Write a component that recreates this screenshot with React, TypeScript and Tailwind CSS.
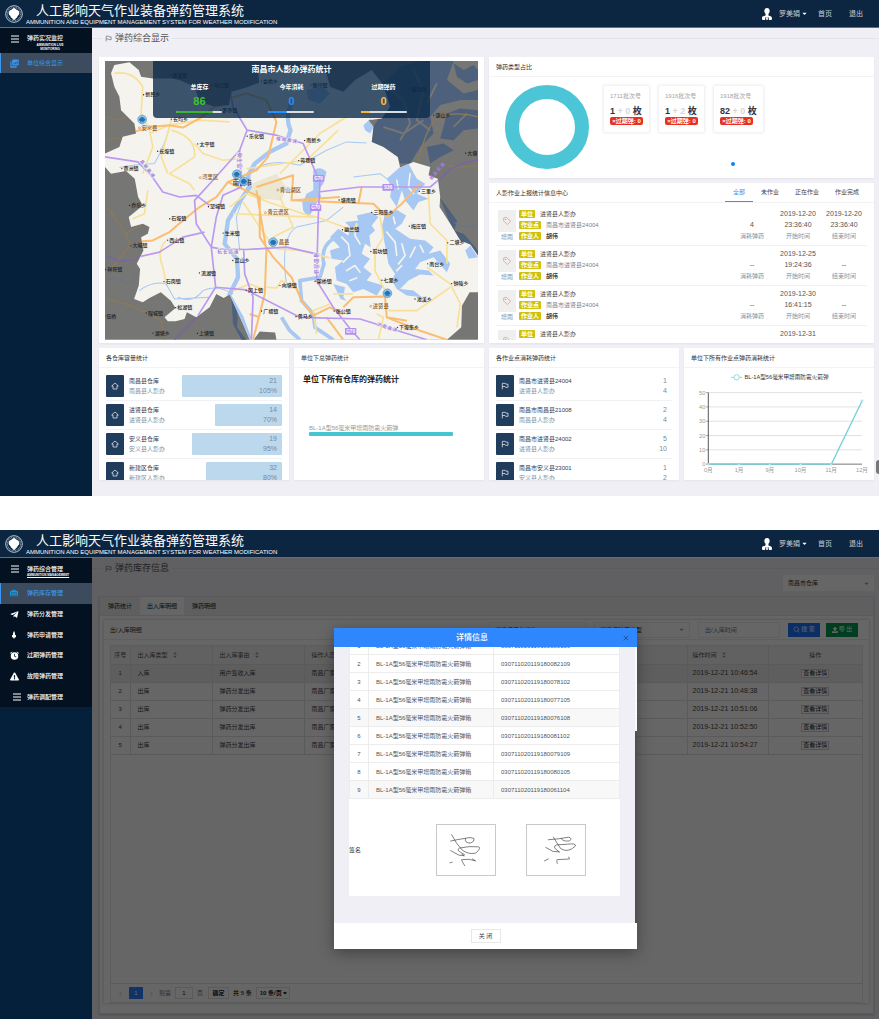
import React from "react";
import { Tag, Search, X, ChevronLeft, ChevronRight } from "lucide-react";
import { FaExclamationTriangle, FaTelegramPlane, FaWarehouse, FaCaretDown, FaUpload } from "react-icons/fa";

type IconProps = { className?: string };

/* ---------- icons ---------- */

const FlagIcon = ({ className }: IconProps) => (
  <svg viewBox="0 0 24 24" className={className} fill="none" stroke="currentColor" strokeWidth="2">
    <path d="M4 22V4h9l1.500 2.500H21V16h-7.500L12 13.500H4" />
  </svg>
);

const HomeIcon = ({ className }: IconProps) => (
  <svg viewBox="0 0 24 24" className={className} fill="none" stroke="currentColor" strokeWidth="2" strokeLinejoin="round">
    <path d="M12 3 2 12h4v9h12v-9h4z" />
  </svg>
);

const MenuIcon = ({ className }: IconProps) => (
  <svg viewBox="0 0 24 24" className={className} stroke="currentColor" strokeWidth="3">
    <path d="M0 3h24M0 12h24M0 21h24" />
  </svg>
);

const UserIcon = ({ className }: IconProps) => (
  <svg viewBox="0 0 30 36" className={className} fill="currentColor">
    <path d="M15 0c5 0 8 3.500 8 9s-3 10-8 10S7 14.500 7 9s3-9 8-9z" />
    <path d="M11 17h8l1 6c6 0 10 3 10 7v3c0 2-1 3-3 3h-6l-2-9h-8l-2 9H3c-2 0-3-1-3-3v-3c0-4 4-7 10-7z" />
    <path d="M13 26h4l1 8-2 2h-2l-2-2z" />
  </svg>
);

const AlarmIcon = ({ className }: IconProps) => (
  <svg viewBox="0 0 24 24" className={className} fill="currentColor">
    <path fillRule="evenodd" d="M12 3a10 10 0 1 1 0 20 10 10 0 0 1 0-20zm-1 4v7l5 3 1-1.500-4-2.500V7z" />
    <path d="M1 8a5 5 0 0 1 6-6zM23 8a5 5 0 0 0-6-6z" />
  </svg>
);

const RocketIcon = ({ className }: IconProps) => (
  <svg viewBox="0 0 24 24" className={className} fill="currentColor">
    <path d="M12 0c3 4 3 8 3 11l3 2v6h-3l-3 5-3-5H6v-6l3-2c0-3 0-7 3-11z" />
  </svg>
);

const LayersIcon = ({ className }: IconProps) => (
  <svg viewBox="0 0 24 24" className={className} fill="currentColor">
    <path d="M8 1h13a2 2 0 0 1 2 2v12a2 2 0 0 1-2 2H8a2 2 0 0 1-2-2V3a2 2 0 0 1 2-2z" />
    <path d="M4 6v13h14v2a2 2 0 0 1-2 2H3a2 2 0 0 1-2-2V8a2 2 0 0 1 2-2z" />
    <path d="M11 10v4m4-6v6m4-8v8" stroke="#3c4b5d" strokeWidth="2" />
  </svg>
);

const Logo = () => (
  <svg viewBox="0 0 54 54" className="size-[18px] shrink-0">
    <circle cx="27" cy="27" r="25" fill="none" stroke="#b8c4cf" strokeWidth="3" />
    <circle cx="27" cy="27" r="20" fill="none" stroke="#7f93a6" strokeWidth="4" strokeDasharray="3 2" />
    <path
      d="M27 9c4 0 5 4 8 5 5 1 8 5 8 10s-2 6-5 9c-2 3-1 6-5 6l-3 5h-6l-3-5c-4 0-3-3-5-6-3-3-5-4-5-9s3-9 8-10c3-1 4-5 8-5z"
      fill="#fff"
    />
  </svg>
);

/* ---------- shared parts ---------- */

const TopBar = () => (
  <header className="flex h-[28px] items-center justify-between border-b border-[#5a7189] bg-[#0c2641] text-white">
    <div className="flex items-center pl-[5px]">
      <Logo />
      <div className="pl-[3px]">
        <h1 className="pl-[10px] pt-px text-[13px] leading-[16px]">人工影响天气作业装备弹药管理系统</h1>
        <p className="text-[6px] leading-[7px]">
          AMMUNITION AND EQUIPMENT MANAGEMENT SYSTEM FOR WEATHER MODIFICATION
        </p>
      </div>
    </div>
    <nav className="flex items-center pr-4 text-[7px] leading-[9px] text-[#c3ced8]">
      <UserIcon className="h-[12px] w-[10px] text-white" />
      <button type="button" className="ml-[7px] flex items-center gap-px">
        罗美娟
        <FaCaretDown className="size-[7px] text-white" />
      </button>
      <a href="#home" className="ml-[10px]">首页</a>
      <a href="#logout" className="ml-[17px]">退出</a>
    </nav>
  </header>
);

const PageTitle = ({ children }: { children: string }) => (
  <div className="flex h-[20px] items-center">
    <span className="h-px w-[10px] bg-[#e4e4e8]" />
    <FlagIcon className="ml-[3px] size-[7px] text-[#555]" />
    <h2 className="px-[3px] text-[9px] leading-[12px] text-[#555]">{children}</h2>
    <span className="h-px flex-1 bg-[#e4e4e8]" />
  </div>
);

const Card = ({ title, extra, children, className = "" }: { title: string; extra?: React.ReactNode; children: React.ReactNode; className?: string }) => (
  <section className={"min-w-0 overflow-hidden bg-white shadow-[0_1px_2px_rgba(0,0,0,0.05)] " + className}>
    <div className="flex h-[20px] items-center justify-between border-b border-[#f3f3f5] px-[7px]">
      <h3 className="whitespace-nowrap text-[6px] leading-[8px] text-[#333]">{title}</h3>
      {extra}
    </div>
    {children}
  </section>
);

/* ---------- map ---------- */

type Label = [number, number, string];

const towns: Label[] = [
  [160, 139, "新民乡"], [202, 308, "长埠镇"], [322, 286, "太平镇"], [470, 263, "乐化镇"], [642, 276, "南新乡"],
  [624, 336, "蒋巷镇"], [745, 454, "塘南镇"], [1028, 200, "康山乡"], [1116, 314, "大塘"], [985, 428, "三里乡"],
  [95, 360, "黄洲镇"], [118, 470, "乔乐乡"], [354, 474, "望城镇"], [238, 510, "石埠镇"], [850, 491, "三阳集乡"],
  [955, 532, "梅庄镇"], [398, 553, "生米镇"], [232, 574, "西山镇"], [122, 591, "大城镇"], [755, 543, "幽兰镇"],
  [840, 608, "前坊镇"], [1070, 582, "二塘乡"], [427, 635, "富山乡"], [327, 672, "流湖镇"], [1010, 645, "南台乡"],
  [46, 662, "祥符镇"], [221, 698, "石岗镇"], [873, 694, "七里乡"], [1082, 704, "钟陵乡"], [467, 725, "冈上镇"],
  [568, 710, "向塘镇"], [673, 697, "架桥镇"], [972, 750, "池溪乡"], [168, 792, "隍城镇"], [256, 776, "松湖镇"],
  [513, 786, "广福镇"], [616, 803, "黄马乡"], [730, 786, "张公镇"], [188, 852, "湖塘乡"], [321, 853, "上塘镇"],
  [927, 835, "下埠集乡"], [240, 80, "滩溪镇"], [365, 110, "马口镇"], [512, 98, "金桥乡"], [660, 110, "联圩镇"],
  [390, 186, "罗亭镇"], [243, 212, "长均乡"], [955, 122, "瑞洪镇"], [36, 802, "伍桥"],
];

const districts: Label[] = [
  [150, 238, "安义县"], [332, 387, "湾里区"], [572, 424, "青山湖区"], [535, 492, "青云谱区"], [553, 580, "昌县"], [842, 772, "进贤县"],
];

const shields: Label[] = [[656, 384, "G70"], [864, 411, "S36"], [647, 472, "G70"], [752, 842, "G70"]];

const pins: [number, number][] = [[128, 208], [411, 372], [432, 393], [520, 575], [862, 728]];

const region =
  "M35 70L45 45 90 37 118 60 125 80 160 85 215 85 240 90 285 110 300 155 345 170 388 165 395 125 440 112 478 98 475 60 520 50 620 60 680 70 690 110 730 125 765 90 815 60 850 105 870 170 845 205 805 210 820 230 815 275 850 290 893 320 900 352 940 335 990 350 985 375 1013 385 1020 440 1018 470 1050 520 1080 570 1110 582 1133 615V725L1108 725 1085 765 1083 830 1040 867H530L526 845 480 842 462 867H450L430 820 390 732 372 742 350 730 330 770 290 800 262 785 255 805 228 812 205 812 195 800 228 772 214 750 184 725 150 742 130 755 104 745 118 705 122 655 112 640 132 600 125 560 145 550 150 530 130 520 95 530 88 500 130 465 116 440 106 385 80 362 35 370 17 350V310L60 290 70 260 110 250 105 220 65 180 60 140 45 110z";

const MapView = () => (
  <svg viewBox="17 33 1116 834" className="block h-auto w-full" role="img" aria-label="南昌市">
    <defs>
      <clipPath id="region"><path d={region} /></clipPath>
    </defs>
    <rect x="17" y="33" width="1116" height="834" fill="#767674" />
    <g fill="#4d607c">
      <path d="M800 120L860 90 900 50 960 33H1060L1040 90 1090 130 1133 120V150L1080 150 1020 165 990 200 1000 250 960 290 930 340 900 340 893 320 850 290 815 275 820 230 845 190z" />
      <path d="M1060 40L1090 60 1120 45 1133 60V90L1100 100 1070 80zM1040 190L1080 175 1133 180V235L1090 240 1060 270 1020 265 1030 230zM980 290L1030 280 1060 300 1020 320 990 340zM1018 440L1040 470 1070 510 1062 540 1090 550 1133 600V620L1080 570 1050 520z" />
      <path d="M395 735Q420 780 412 830L440 867H425L400 820z" />
    </g>
    <g fill="none" stroke="#767674" strokeWidth="6">
      <path d="M860 110l50 40 20 70-30 50M940 60l30 60-20 90 40 30M1010 100l-30 60M850 230l60 20 60-40M1100 190l-40 40" />
    </g>
    <g fill="none" stroke="#8c7a57" strokeWidth="4">
      <path d="M17 200L60 210 90 195 110 215M17 270L60 262M20 465L60 520 80 550 92 585 60 625 35 655M80 550L130 520M20 745L80 760 140 785 185 810 195 867M940 380Q980 220 1010 205 1060 180 1133 200M1040 345L1080 352 1133 345" />
    </g>
    <path d="M1133 330Q1050 340 1020 390M17 615L60 632 120 625M300 790L225 867" fill="none" stroke="#7c62a6" strokeWidth="4" />
    <path d="M17 690Q60 670 80 700 105 690 112 670M1060 515Q1100 540 1133 520" fill="none" stroke="#6a7584" strokeWidth="3" />

    <path d={region} fill="#f5f3ed" />
    <g clipPath="url(#region)">
      <path d="M455 400L530 370 560 410 545 450 480 445 450 430z" fill="#eae7d3" />
      <g fill="#a7c8f2">
        <path d="M860 385L900 350 925 340 950 385 975 400 950 430 985 445 955 455 940 480 915 450 905 420 890 470 870 440 875 410z" />
        <path d="M640 360Q662 345 680 365L670 400 655 420 665 440 640 452 610 455 620 430 640 420zM607 455L655 450 640 480 625 500 610 480z" />
        <path d="M855 490L890 478 918 495 905 520 885 535 930 565 975 570 1000 590 985 610 1020 600 1050 640 1040 665 1000 620 960 635 945 655 985 660 1000 675 960 672 925 690 900 715 940 720 965 740 920 735 890 715 875 690 885 670 865 640 858 600 850 560 845 530z" />
        <path d="M690 560L715 535 745 555 750 530 735 515 775 510 770 495 815 485 835 500 815 525 825 540 808 555 812 590 795 580 785 610 810 625 790 650 815 670 800 690 850 705 830 735 790 715 760 725 740 700 710 690 705 650 730 630 695 625 690 600 720 590z" />
        <path d="M790 225L812 205 820 232 810 250 795 240zM1095 600L1110 585 1133 620 1105 625zM700 700L735 710 730 740 740 750 722 745zM620 120L670 110 690 130 660 160 625 150z" />
      </g>
      <g fill="none" stroke="#f5f3ed" strokeWidth="5" strokeLinecap="round" strokeLinejoin="round">
        <path d="M725 560l20 20 5 35-20 20M770 520l-5 35 15 25M740 660l25-15 15 20M750 690l20-8M860 545l25 30 5 40M905 580l10 35-20 25M945 590l-15 30M970 605l-10-20M880 500l5 20M890 660l15-15M930 370l-5 40 15 20M890 390l5 25" />
      </g>
      <g fill="none" stroke="#a7c8f2" strokeLinejoin="round">
        <path d="M575 160Q555 205 572 240L560 280 510 305 465 340 445 375 450 410 415 460 385 510 375 580 412 625 415 680 388 735 425 800 450 867" strokeWidth="13" />
        <path d="M700 565Q660 590 672 640L660 680 600 690 605 750 640 790 645 830 700 867M545 800L570 840 600 867" strokeWidth="11" />
        <path d="M215 210Q200 280 165 340L100 345 60 352M450 370Q500 320 600 345L680 300 740 275 800 278M235 740Q280 760 310 720 350 700 400 730M560 700Q540 560 590 530L680 510 730 470M120 720Q160 690 200 700L225 745 330 740M760 380L840 370 880 400M445 400L410 500 420 600" strokeWidth="3" />
      </g>
      <g fill="none" stroke="#f8e09a" strokeWidth="5" strokeLinejoin="round">
        <path d="M45 70Q100 60 130 110L125 190 150 240 160 290 130 370M215 210L185 320 205 370M215 240Q290 260 285 320L240 350 210 370 270 400 285 420M150 250L210 225 300 210 390 215M285 280L310 310 370 330 420 325M390 470L440 430 520 460 610 490 650 500 760 540 770 520M430 455L520 590M440 355L620 330 715 240M540 370L660 250 740 200M145 420L135 490 100 505M200 570Q170 600 190 650L200 700M520 560L580 530 540 440M530 595L600 600 690 622M500 710L530 712 545 690 600 720M840 500L850 560 825 600 825 660 855 720M690 760L640 780 650 850M985 430L990 520 1040 570 1040 640M980 650L1050 700 1080 760 1070 830M865 780L950 780 1050 710M400 490L640 500M830 790L850 800 835 867M700 730L760 730M400 720L450 700 500 720" />
      </g>
      <g fill="none" stroke="#fabd72" strokeWidth="6" strokeLinejoin="round">
        <path d="M17 270L120 240 160 230 210 225 250 232 300 205 370 150 440 130 500 150 530 215 505 320 470 360 385 395 350 440 300 470 250 510 210 545 160 570 90 575M385 395L480 440 480 560 520 620 575 680 605 750 640 795 690 770 730 790M470 420L500 600 495 730 460 867M470 410L580 375 575 450 820 460 860 500 905 460 960 400M580 450L720 440M730 770L760 740 855 738 860 800 960 840 1040 867M680 800L730 867M860 800L920 810M775 460L785 410M450 790L480 800" />
      </g>
      <g fill="none" stroke="#b99af0" strokeWidth="5" strokeLinejoin="round">
        <path d="M17 320L115 335 155 375 190 425 240 440 290 435 330 465M380 60L400 170 442 240 530 255 610 280 660 395 655 500 650 690 700 770 755 840 780 867M442 240L420 300 340 390 285 450 290 520 335 590 360 595 440 597 560 590 650 610M420 300L425 410 370 435 350 500 335 590 348 710 295 795M17 615L60 632 180 605 250 560 315 545M348 710L440 718 600 800 780 805 980 867M432 600L435 670 460 740 455 867M655 425L780 410 990 410 1020 385" />
      </g>
    </g>

    <g fontSize="13" fontWeight="700" fill="#a27de0" textAnchor="middle" stroke="#f5f3ed" strokeWidth="3" paintOrder="stroke">
      <text x="560" y="274" transform="rotate(8 560 274)">福 银 高 速</text>
      <text x="385" y="606">杭 长 高 速</text>
      <text x="140" y="358" transform="rotate(52 140 358)">昌 铜 高 速</text>
      <text x="860" y="834" transform="rotate(18 860 834)">沪 昆 高 速</text>
      <text x="1014" y="366" transform="rotate(-50 1014 366)" stroke="none">德 昌 高 速</text>
      <text x="648" y="635" transform="rotate(90 644 635)">福 银 高 速</text>
      <text x="420" y="335" transform="rotate(90 416 335)">枫 生 高 速</text>
    </g>
    <g fontSize="15" fontWeight="500" textAnchor="middle" fill="#222">
      {towns.map(([x, y, t]) => (
        <g key={t}>
          <text x={x} y={y}>{t}</text>
          <circle cx={x - (t.length * 15) / 2 - 5} cy={y - 5} r="2" />
        </g>
      ))}
    </g>
    <g fontSize="16" fontWeight="500" textAnchor="middle" fill="#8a5c30">
      {districts.map(([x, y, t]) => (
        <g key={t}>
          <text x={x} y={y}>{t}</text>
          <circle cx={x - t.length * 8 - 6} cy={y - 5} r="3" fill="none" stroke="#a07346" strokeWidth="1.500" />
        </g>
      ))}
    </g>
    {shields.map(([x, y, t]) => (
      <g key={t + y}>
        <rect x={x - 17} y={y - 10} width="34" height="20" rx="2" fill="#b48ff0" />
        <text x={x} y={y + 5} textAnchor="middle" fontSize="14" fontWeight="700" fill="#fff">{t}</text>
      </g>
    ))}
    <text x="428" y="405" textAnchor="middle" fontSize="19" fontWeight="500" fill="#222">南昌市</text>
    {pins.map(([x, y]) => (
      <g key={x}>
        <circle cx={x} cy={y} r="13" fill="#8cc4ee" stroke="#4f8fc4" strokeWidth="2" />
        <path d={`M${x - 9} ${y - 1}q9-13 18 0v4q-9 5-18 0z`} fill="#2272b4" />
        <path d={`M${x - 6} ${y + 7}h12`} stroke="#1b5688" strokeWidth="2" />
      </g>
    ))}
  </svg>
);

const totals = [
  { label: "总库存", value: 86, text: "text-[#3fc22f]", bar: "bg-[#3fb52f] w-4/5" },
  { label: "今年消耗", value: 0, text: "text-[#1e90ff]", bar: "bg-[#1e90ff] w-2/5" },
  { label: "过期弹药", value: 0, text: "text-[#ffbe43]", bar: "bg-[#f5b73b] w-1/5" },
];

const MapCard = () => (
  <section className="col-span-2 self-start bg-white px-[6px] pb-[3px] pt-1 shadow-[0_1px_2px_rgba(0,0,0,0.05)]">
    <div className="relative">
      <MapView />
      <div className="absolute inset-x-[13%] top-0 h-[57px] rounded-b bg-[#0c2a4a]/80 text-center text-white">
        <h3 className="pt-[3px] text-[8px] font-bold leading-[12px]">南昌市人影办弹药统计</h3>
        <div className="grid grid-cols-3 pt-[7px]">
          {totals.map((t) => (
            <div key={t.label} className="flex flex-col items-center">
              <span className="text-[6px] font-bold leading-[8px]">{t.label}</span>
              <strong className={"pt-[3px] text-[11px] leading-[14px] " + t.text}>{t.value}</strong>
              <span className="mt-[3px] block h-[2px] w-1/2 rounded bg-[#d9dde2]">
                <span className={"block h-full rounded " + t.bar} />
              </span>
            </div>
          ))}
        </div>
      </div>
    </div>
  </section>
);

/* ---------- dashboard cards ---------- */

const batches = [
  { name: "1711批次号", a: 1, b: 0 },
  { name: "1916批次号", a: 1, b: 2 },
  { name: "1918批次号", a: 82, b: 0 },
];

const TypeShare = () => (
  <Card title="弹药类型占比">
    <div className="flex h-[101px] pl-4">
      <svg viewBox="0 0 84 84" className="mt-[8px] size-[84px] shrink-0">
        <circle cx="42" cy="42" r="35" fill="none" stroke="#4cc6d6" strokeWidth="14" />
      </svg>
      <div className="flex flex-1 flex-col items-center justify-between pb-3 pl-[14px] pr-3 pt-2">
        <ul className="flex gap-2 self-start">
          {batches.map((b) => (
            <li key={b.name} className="h-[48px] rounded-[2px] border border-[#f3f3f3] px-[6px] pt-[6px] shadow-[0_0_3px_rgba(0,0,0,0.08)]">
              <p className="text-[6px] leading-[8px] text-[#a5a5a5]">{b.name}</p>
              <p className="whitespace-nowrap pt-[5px] text-[9px] font-bold leading-[12px] text-[#33343f]">
                {b.a} <span className="text-[#d5d7da]">+ {b.b}</span> 枚
              </p>
              <p className="flex h-[8px] w-[33px] items-center justify-center whitespace-nowrap rounded-[2px] bg-[#e8301f] text-[6px] font-bold leading-[8px] text-white">
                ×过期弹: 0
              </p>
            </li>
          ))}
        </ul>
        <span className="size-1 rounded-full bg-[#1180ff]" />
      </div>
    </div>
  </Card>
);

const reports = [
  { used: "4", start: ["2019-12-20", "23:36:40"], end: ["2019-12-20", "23:36:40"] },
  { used: "--", start: ["2019-12-25", "19:24:36"], end: ["", "--"] },
  { used: "--", start: ["2019-12-30", "16:41:15"], end: ["", "--"] },
  { used: "--", start: ["2019-12-31", "10:20:08"], end: ["", "--"] },
];

const Badge = ({ children }: { children: string }) => (
  <span className="h-[8px] rounded-[1px] bg-[#cfc00c] px-[2px] text-[6px] font-bold leading-[8px] text-white">{children}</span>
);

const Stat = ({ top, mid, label }: { top?: string; mid: string; label: string }) => (
  <div className="flex w-[46px] flex-col items-center text-[#555]">
    <span className="h-[11px] text-[7px] leading-[8px]">{top}</span>
    <span className="h-[11px] text-[7px] leading-[8px]">{mid}</span>
    <span className="text-[6px] leading-[8px] text-[#8292a2]">{label}</span>
  </div>
);

const ReportCenter = () => (
  <Card
    title="人影作业上报统计信息中心"
    extra={
      <nav className="flex h-full text-[6px] text-[#444]">
        <button type="button" className="h-full border-b border-[#3a94e8] px-2 text-[#3a94e8]">全部</button>
        <button type="button" className="px-2">未作业</button>
        <button type="button" className="px-2">正在作业</button>
        <button type="button" className="px-2">作业完成</button>
      </nav>
    }
  >
    <ul className="mx-[7px] mb-[3px] mt-[3px] h-[134px] overflow-hidden">
      {reports.map((r) => (
        <li key={r.start[0]} className="flex h-[40px] border-b border-[#f2f2f4] pt-1">
          <div className="ml-[2px] flex w-[18px] flex-col items-center">
            <span className="flex h-[22px] w-full items-center justify-center bg-[#efefef]">
              <Tag className="size-[8px] text-[#ef8a66]" />
            </span>
            <span className="pt-px text-[6px] leading-[8px] text-[#8292a2]">增雨</span>
          </div>
          <div className="flex flex-1 flex-col gap-[3px] pl-[3px] text-[6px] leading-[8px] text-[#444]">
            <p className="flex gap-[5px]"><Badge>单位</Badge>进贤县人影办</p>
            <p className="flex gap-[5px] text-[#71859a]"><Badge>作业点</Badge>南昌市进贤县24004</p>
            <p className="flex gap-[5px] font-bold"><Badge>作业人</Badge>胡伟</p>
          </div>
          <Stat mid={r.used} label="消耗弹药" />
          <Stat top={r.start[0]} mid={r.start[1]} label="开始时间" />
          <Stat top={r.end[0]} mid={r.end[1]} label="结束时间" />
        </li>
      ))}
    </ul>
  </Card>
);

type ListRow = { name: string; unit: string; a: string; b: string; bar?: string };

const stores: ListRow[] = [
  { name: "南昌县仓库", unit: "南昌县人影办", a: "21", b: "105%", bar: "w-[100px]" },
  { name: "进贤县仓库", unit: "进贤县人影办", a: "14", b: "70%", bar: "w-[67px]" },
  { name: "安义县仓库", unit: "安义县人影办", a: "19", b: "95%", bar: "w-[90px]" },
  { name: "新建区仓库", unit: "新建区人影办", a: "32", b: "80%", bar: "w-[76px]" },
];

const points: ListRow[] = [
  { name: "南昌市进贤县24004", unit: "进贤县人影办", a: "1", b: "4" },
  { name: "南昌市南昌县21008", unit: "南昌县人影办", a: "2", b: "4" },
  { name: "南昌市进贤县24002", unit: "进贤县人影办", a: "5", b: "10" },
  { name: "南昌市安义县23001", unit: "安义县人影办", a: "1", b: "2" },
];

const StatList = ({ rows, icon }: { rows: ListRow[]; icon: React.ReactNode }) => (
  <ul className="mx-[7px] h-[112px] overflow-hidden pt-[7px]">
    {rows.map((r) => (
      <li key={r.name} className="mb-[3px] flex border-b border-[#f2f2f4] pb-[3px]">
        <span className="flex h-[22px] w-[18px] items-center justify-center rounded-[1px] bg-[#213d5e] text-white">{icon}</span>
        <div className="flex flex-1 flex-col justify-between whitespace-nowrap py-[2px] pl-[5px] text-[6px] leading-[8px]">
          <span className="text-[#3a3a4a]">{r.name}</span>
          <span className="text-[#8292a2]">{r.unit}</span>
        </div>
        <div
          className={
            "flex h-[22px] flex-col justify-between rounded-[1px] py-[2px] pr-[5px] text-right text-[7px] leading-[8px] text-[#7b8a99] " +
            (r.bar ? "bg-[#bcd8ed] " + r.bar : "w-[30px]")
          }
        >
          <span>{r.a}</span>
          <span>{r.b}</span>
        </div>
      </li>
    ))}
  </ul>
);

const months = ["0月", "1月", "9月", "10月", "11月", "12月"];

const LineChart = () => (
  <svg viewBox="612 86 571 334" className="block h-auto w-full" fontSize="17">
    <path d="M753 114h34" stroke="#8edbe3" strokeWidth="3" />
    <circle cx="770" cy="114" r="8" fill="#fff" stroke="#8edbe3" strokeWidth="3" />
    <text x="794" y="120" fill="#333">BL-1A型56毫米甲增雨防雹火箭弹</text>
    {[50, 40, 30, 20, 10, 0].map((v, i) => (
      <g key={v}>
        <path d={`M685 ${160 + i * 43}H1147`} stroke={v ? "#d2d2d2" : "#777"} strokeWidth={v ? 2 : 3} />
        <path d={`M678 ${160 + i * 43}h7`} stroke="#777" strokeWidth="2" />
        <text x="676" y={166 + i * 43} textAnchor="end" fill="#999">{v}</text>
      </g>
    ))}
    <path d="M685 160V375" stroke="#555" strokeWidth="3" />
    <path d="M685 375H1055L1147 185" fill="none" stroke="#72d2dc" strokeWidth="4" />
    {months.map((m, i) => (
      <g key={m}>
        <circle cx={685 + i * 92.4} cy={i === 5 ? 185 : 375} r="3" fill="#fff" stroke="#72d2dc" strokeWidth="2" />
        <text x={685 + i * 92.4} y="400" textAnchor="middle" fill="#999">{m}</text>
      </g>
    ))}
  </svg>
);

const Dashboard = () => (
  <section>
    <TopBar />
    <div className="flex">
      <aside className="w-[92px] shrink-0 bg-[#04203b] text-white">
        <div className="flex h-[25px] items-center bg-[#031121] pl-[11px]">
          <MenuIcon className="-mt-1 size-[8px]" />
          <div className="pl-2 pt-1">
            <p className="text-[6px] font-medium leading-[8px]">弹药实况监控</p>
            <p className="w-[46px] pt-px text-center text-[3px] font-bold leading-[4px]">AMMUNITION LIVE MONITORING</p>
          </div>
        </div>
        <a href="#overview" className="flex h-[20px] items-center border-l border-[#3d96ee] bg-[#3c4b5d] pl-[9px] text-[6px] leading-[8px] text-[#3d96ee]">
          <LayersIcon className="mr-2 size-[9px]" />
          单位综合显示
        </a>
      </aside>
      <main className="relative min-w-0 flex-1 bg-[#f0eff5] pb-4">
        <PageTitle>弹药综合显示</PageTitle>
        <div className="grid grid-cols-4 gap-[5px] pl-[7px] pr-[5px] pt-[9px]">
          <MapCard />
          <div className="col-span-2 flex flex-col gap-[5px]">
            <TypeShare />
            <ReportCenter />
          </div>
          <Card title="各仓库容量统计">
            <StatList rows={stores} icon={<HomeIcon className="size-[8px]" />} />
          </Card>
          <Card title="单位下总弹药统计">
            <h4 className="pl-[9px] pt-[6px] text-[8px] font-bold leading-[12px] text-[#222]">单位下所有仓库的弹药统计</h4>
            <div className="px-[15px] pt-[38px]">
              <p className="text-[6px] leading-[8px] text-[#999]">BL-1A型56毫米甲增雨防雹火箭弹</p>
              <span className="block h-[4px] w-[90%] rounded-[1px] bg-[#47c4d3]" />
            </div>
          </Card>
          <Card title="各作业点消耗弹药统计">
            <StatList rows={points} icon={<FlagIcon className="size-[8px]" />} />
          </Card>
          <Card title="单位下所有作业点弹药消耗统计">
            <LineChart />
          </Card>
        </div>
        <button type="button" aria-label="展开" className="absolute bottom-[22px] right-0 h-[14px] w-[3px] rounded-l bg-[#777]" />
      </main>
    </div>
  </section>
);

/* ---------- stock page ---------- */

const navItems = [
  { label: "弹药库存管理", icon: <FaWarehouse className="size-[8px] text-[#1597e0]" />, active: true },
  { label: "弹药分发管理", icon: <FaTelegramPlane className="size-[9px]" /> },
  { label: "弹药申请管理", icon: <RocketIcon className="size-[8px]" /> },
  { label: "过期弹药管理", icon: <AlarmIcon className="size-[9px]" /> },
  { label: "故障弹药管理", icon: <FaExclamationTriangle className="size-[9px]" /> },
  { label: "弹药调配管理", icon: <MenuIcon className="ml-[3px] size-[8px]" /> },
];

const logs = [
  ["入库", "用户签收入库", "2019-12-21 10:46:54"],
  ["出库", "弹药分发出库", "2019-12-21 10:48:38"],
  ["出库", "弹药分发出库", "2019-12-21 10:51:06"],
  ["出库", "弹药分发出库", "2019-12-21 10:52:50"],
  ["出库", "弹药分发出库", "2019-12-21 10:54:27"],
];

const boxes = [
  "030711020119180083106", "030711020119180082109", "030711020119180078102", "030711020119180077105", "030711020119180076108",
  "030711020119180081102", "030711020119180079109", "030711020119180080105", "030711020119180061104",
];

const Sorter = () => (
  <svg viewBox="0 0 10 16" className="ml-1 inline-block h-[6px] w-[4px] align-middle" fill="#999">
    <path d="M5 0l5 6H0zM5 16l5-6H0z" />
  </svg>
);

const Picker = ({ label, className }: { label: string; className: string }) => (
  <span className={"relative flex items-center " + className}>
    <select aria-label={label} className="h-full w-full appearance-none bg-transparent px-[5px] text-[6px] leading-[8px] text-[#333] outline-none">
      <option>{label}</option>
    </select>
    <FaCaretDown className="pointer-events-none absolute right-[4px] size-[7px] text-[#999]" />
  </span>
);

const SignatureA = () => (
  <svg viewBox="0 0 180 156" className="h-[52px] w-[60px] border border-[#c9c9c9]" fill="none" stroke="#3c3c3c" strokeWidth="2" strokeLinecap="round" strokeLinejoin="round">
    <path d="M45 30Q60 60 78 78 95 92 120 88 140 70 128 68 100 65 70 72 55 78 85 92M42 50Q60 46 85 42 105 36 115 42 118 52 105 56 85 58 88 42M42 80L68 94 85 96 78 92M86 127Q72 105 78 108 100 104 120 112L110 106M40 118l7-2" />
  </svg>
);

const SignatureB = () => (
  <svg viewBox="0 0 180 156" className="h-[52px] w-[60px] border border-[#c9c9c9]" fill="none" stroke="#3c3c3c" strokeWidth="2" strokeLinecap="round" strokeLinejoin="round">
    <path d="M82 38Q95 60 105 74 128 88 150 66 155 56 125 60L92 62Q75 68 100 84M66 46Q100 44 130 38 142 42 132 50 110 52 106 42M58 70L80 82 100 84M94 120Q90 105 96 108L132 106 130 100M54 112l12-6" />
  </svg>
);

const DetailDialog = () => (
  <div role="dialog" aria-label="详情信息" className="w-[303px] shadow-[0_4px_14px_rgba(0,0,0,0.35)]">
    <div className="relative flex h-[19px] items-center justify-center bg-[#2f87fe] pr-[27px]">
      <h3 className="text-[8px] font-medium leading-[12px] text-white">详情信息</h3>
      <button type="button" aria-label="关闭窗口" className="absolute right-[7px]">
        <X className="size-[8px] text-[#1a3a66]" />
      </button>
    </div>
    <div className="flex h-[276px]">
      <div className="flex min-w-0 flex-1 flex-col justify-end overflow-hidden bg-[#f0eff5] px-[15px] pb-[27px]">
        <div className="bg-white">
          <table className="w-full table-fixed border-collapse text-left text-[6px] leading-[8px] text-[#555]">
            <colgroup><col className="w-[19px]" /><col className="w-[125px]" /><col /></colgroup>
            <tbody>
              {boxes.map((n, i) => (
                <tr key={n} className={"h-[18px] border border-[#ececec] " + (i === 4 || i === 8 ? "bg-[#f8f8f8]" : "bg-white")}>
                  <td className="border-r border-[#ececec] text-center">{i + 1}</td>
                  <td className="border-r border-[#ececec] px-[7px]">BL-1A型56毫米甲增雨防雹火箭弹箱</td>
                  <td className="px-[7px]">{n}</td>
                </tr>
              ))}
            </tbody>
          </table>
          <div className="flex h-[97px] items-center">
            <span className="w-[87px] pt-1 text-[6px] leading-[8px] text-[#333]">签名</span>
            <div className="flex gap-[30px] pt-1">
              <SignatureA />
              <SignatureB />
            </div>
          </div>
        </div>
      </div>
      <div className="w-[2px] bg-[#505050]"><div className="h-[84px] bg-[#fafafa]" /></div>
    </div>
    <div className="flex h-[26px] items-center justify-center bg-white">
      <button type="button" className="h-[14px] w-[30px] border border-[#e8e8e8] text-[6px] leading-[8px] text-[#444]">关 闭</button>
    </div>
  </div>
);

const StockPage = () => (
  <section>
    <TopBar />
    <div className="flex">
      <aside className="w-[92px] shrink-0 bg-[#04203b] text-white">
        <div className="flex h-[25px] items-center bg-[#031121] pl-[11px]">
          <MenuIcon className="-mt-1 size-[8px]" />
          <div className="pl-2">
            <p className="text-[6px] font-medium leading-[8px]">弹药综合管理</p>
            <p className="whitespace-nowrap text-[3px] font-bold leading-[4px] underline">AMMUNITION MANAGEMENT</p>
          </div>
        </div>
        <nav className="flex h-[124px] flex-col bg-[#031121] text-[6px] font-medium leading-[8px]">
          {navItems.map((n) => (
            <a
              key={n.label}
              href="#stock"
              className={
                "flex flex-1 items-center border-l pl-[9px] " +
                (n.active ? "border-[#3d96ee] bg-[#3c4b5d] text-[#3d96ee]" : "border-transparent")
              }
            >
              <span className="flex w-[17px]">{n.icon}</span>
              {n.label}
            </a>
          ))}
        </nav>
      </aside>
      <main className="relative min-w-0 flex-1 bg-[#f0eff5] pb-[5px]">
        <PageTitle>弹药库存信息</PageTitle>
        <div className="flex flex-col pl-[7px] pr-[5px]">
          <Picker label="南昌市仓库" className="-mt-[3px] h-[16px] w-[91px] self-end bg-white" />
          <div className="mt-[5px] border border-[#e0e0e4] bg-white shadow-[0_1px_2px_rgba(0,0,0,0.2)]">
            <div className="flex h-[19px] border-b border-[#e4e4e8] bg-[#ededf0] text-[6px] leading-[8px] text-[#222]">
              <button type="button" className="px-[8px]">弹药统计</button>
              <button type="button" className="bg-white px-[7px]">出入库明细</button>
              <button type="button" className="px-[8px]">弹药明细</button>
            </div>
            <div className="m-1 bg-white shadow-[0_0_3px_rgba(0,0,0,0.25)]">
              <div className="flex h-[20px] items-center gap-2 border-b border-[#eee] px-[6px]">
                <h3 className="flex-1 text-[6px] leading-[8px] text-[#333]">出/入库明细</h3>
                <Picker label="请选择具体操作" className="h-[16px] w-[97px] border border-[#eee]" />
                <Picker label="请选择弹药类型" className="h-[16px] w-[96px] border border-[#eee]" />
                <input aria-label="出/入库时间" placeholder="出/入库时间" className="h-[16px] w-[82px] border border-[#eee] px-[6px] text-[6px] placeholder:text-[#777]" />
                <div className="flex gap-[6px] pr-[5px]">
                  <button type="button" className="flex h-[14px] w-[32px] items-center justify-center gap-px bg-[#1e74ff] text-[6px] text-white">
                    <Search className="size-[7px]" />搜 索
                  </button>
                  <button type="button" className="flex h-[14px] w-[32px] items-center justify-center gap-px bg-[#009c4e] text-[6px] text-white">
                    <FaUpload className="size-[6px]" />导 出
                  </button>
                </div>
              </div>
              <div className="mx-[6px] mb-[10px] mt-[5px] flex min-h-[358px] flex-col justify-between border border-[#e6e6e6]">
                <table className="w-full table-fixed border-collapse text-left text-[6px] leading-[8px] text-[#444]">
                  <colgroup>
                    <col className="w-[19px]" /><col className="w-[82px]" /><col className="w-[92px]" /><col /><col className="w-[81px]" /><col className="w-[94px]" />
                  </colgroup>
                  <thead>
                    <tr className="h-[18px] border-b border-[#e0e0e0] bg-[#f2f2f2] text-[#555]">
                      <th className="border-r border-[#e0e0e0] text-center font-normal">序号</th>
                      <th className="border-r border-[#e0e0e0] px-[7px] font-normal">出入库类型 <Sorter /></th>
                      <th className="border-r border-[#e0e0e0] px-[7px] font-normal">出入库事由 <Sorter /></th>
                      <th className="border-r border-[#e0e0e0] px-[7px] font-normal">操作人员</th>
                      <th className="border-r border-[#e0e0e0] px-[5px] font-normal">操作时间 <Sorter /></th>
                      <th className="text-center font-normal">操作</th>
                    </tr>
                  </thead>
                  <tbody>
                    {logs.map((l, i) => (
                      <tr key={l[2]} className={"h-[18px] border-b border-[#e0e0e0] " + (i === 0 ? "bg-[#ececec]" : "")}>
                        <td className="border-r border-[#e0e0e0] text-center">{i + 1}</td>
                        <td className="border-r border-[#e0e0e0] px-[7px]">{l[0]}</td>
                        <td className="border-r border-[#e0e0e0] px-[7px]">{l[1]}</td>
                        <td className="border-r border-[#e0e0e0] px-[7px]">南昌厂家</td>
                        <td className="whitespace-nowrap border-r border-[#e0e0e0] px-[5px] text-[7px]">{l[2]}</td>
                        <td className="text-center">
                          <button type="button" className="h-[9px] border border-[#ccc] bg-white px-px text-[6px] leading-[7px] text-[#222]">查看详情</button>
                        </td>
                      </tr>
                    ))}
                  </tbody>
                </table>
                <div className="flex h-[19px] items-center border-t border-[#e0e0e0] pl-[6px] text-[6px] leading-[8px] text-[#444]">
                  <button type="button" aria-label="上一页"><ChevronLeft className="size-[7px] text-[#aaa]" /></button>
                  <button type="button" className="ml-[5px] h-[12px] w-[14px] bg-[#2f80ff] text-white">1</button>
                  <button type="button" aria-label="下一页" className="ml-[5px]"><ChevronRight className="size-[7px] text-[#aaa]" /></button>
                  <label className="ml-[4px] flex items-center gap-[4px] text-[#777]">
                    到第
                    <input defaultValue="1" className="h-[12px] w-[18px] border border-[#e2e2e2] text-center text-[#222]" />
                    页
                  </label>
                  <button type="button" className="ml-[5px] h-[12px] w-[21px] border border-[#e2e2e2] font-bold text-[#222]">确定</button>
                  <span className="ml-[4px] font-bold">共 5 条</span>
                  <span className="relative ml-[4px] flex h-[12px] w-[34px] items-center">
                    <select aria-label="每页条数" className="h-full w-full appearance-none border border-[#e2e2e2] bg-transparent pl-[3px] font-bold text-[#222]">
                      <option>10 条/页</option>
                    </select>
                    <FaCaretDown className="pointer-events-none absolute right-[2px] size-[6px] text-black" />
                  </span>
                </div>
              </div>
            </div>
          </div>
        </div>
        <div className="absolute inset-0 flex items-center justify-center bg-black/60">
          <DetailDialog />
        </div>
      </main>
    </div>
  </section>
);

export default function App() {
  return (
    <div className="flex flex-col gap-[34px] bg-white font-['Liberation_Sans','Noto_Sans_CJK_SC',sans-serif]">
      <Dashboard />
      <StockPage />
    </div>
  );
}
